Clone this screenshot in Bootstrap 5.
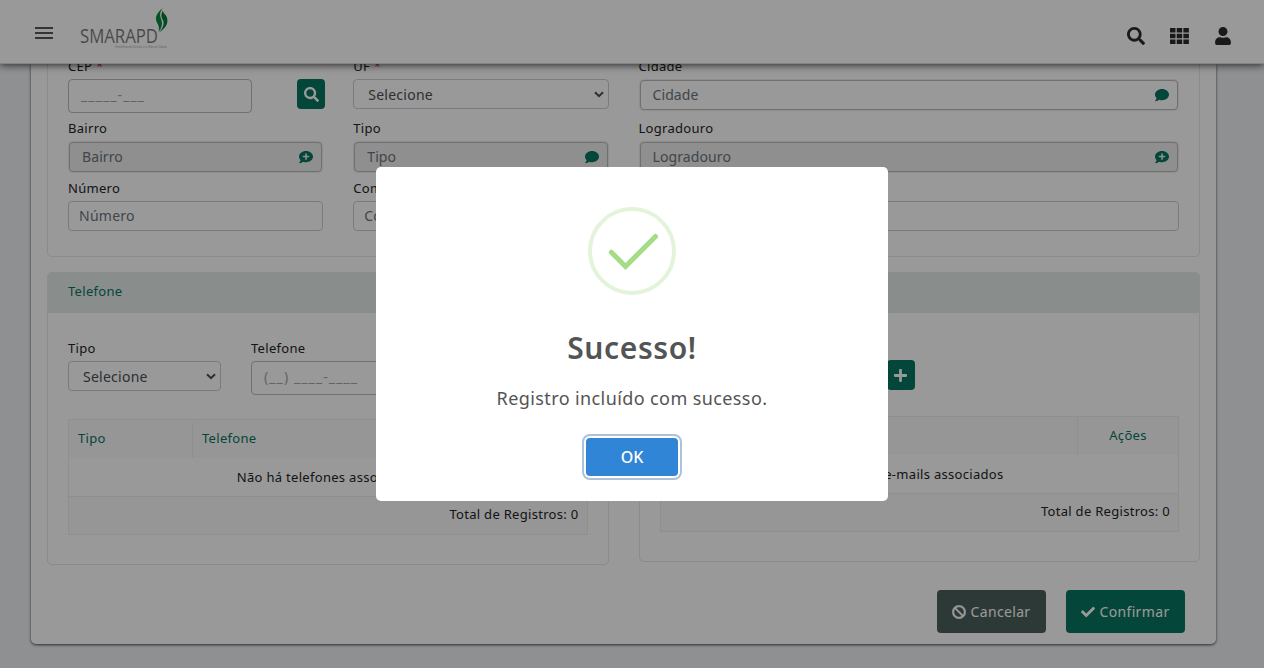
<!DOCTYPE html>
<html lang="pt-BR">
<head>
<meta charset="utf-8">
<title>SMARAPD</title>
<link href="https://cdn.jsdelivr.net/npm/bootstrap@5.3.0/dist/css/bootstrap.min.css" rel="stylesheet">
<style>
body{font-family:"Noto Sans","Open Sans",sans-serif;font-size:13px;color:#212529;background:#eef1f4;height:668px;overflow:hidden;letter-spacing:.3px}
svg{display:block;flex:none}
.topbar{height:64px;background:#fff;border-bottom:1px solid #dcdcdc;box-shadow:0 1px 8px rgba(0,0,0,.75);z-index:5;padding:0 33px 0 35px}
.ic{fill:currentColor}
.page-card{margin:0 48px 0 31px;height:580px;border-radius:0 0 5px 5px;box-shadow:0 1px 3px rgba(0,0,0,.7);padding:0 16px}
.panel{border:1px solid #e2eaea;border-radius:5px}
.address{display:flow-root;height:193px;border-top:0;border-radius:0 0 5px 5px;padding:0 20px}
.row-30{--bs-gutter-x:30px}
.lab{height:20px;line-height:20px;white-space:nowrap}
.r1{height:62px;margin-top:-8px}.r2{height:60px}
.ctl{height:30px;padding:0 10px;border:1px solid #c9ced4;border-radius:4px;font-size:14px;line-height:1;color:#6c757d;letter-spacing:.25px;background:#fff;display:flex;align-items:center;white-space:nowrap}
.ctl.pick{color:#495057;padding:1px 4px 0 14px;justify-content:space-between}
.ctl.mask{height:34px;border-color:#bbb;color:#a5a5a5;padding:0 0 3px 12px;letter-spacing:1.1px}
.ctl.lookup{margin-left:1px;margin-right:1px;border-color:#bbb;box-shadow:0 0 1px 1px rgba(0,0,0,.08);padding:0 8px 0 12px;justify-content:space-between;letter-spacing:.1px}
.ctl.off{background:#eee}
.lookup svg{color:#077560}
.btn-g{background:#077560;color:#fff;border-radius:4px}
.sq{width:28px;height:30px}
.head{height:41px;background:#e4edec;color:#077560;border-radius:5px 5px 0 0;padding:0 0 2px 21px;margin:-1px -1px 0}
.grid{border:1px solid #eee}
.grid>div{height:38px}
.g-row{padding-top:2px}
.g-head{background:#fafafa;color:#077560;padding-top:3px}
.g-head span:first-child{border-right:1px solid #eee}
.g-foot{background:#fafafa;border-top:1px solid #eee;padding:0 8px 2px 0}
.act{height:43px;border-radius:4px;font-size:14px;letter-spacing:.35px;color:#fff}
.shade{position:fixed;inset:0;background:rgba(0,0,0,.4);z-index:20}
.pop{width:512px;height:334px;border-radius:5px;background:#fff;color:#545454;padding-top:40px;border:0}
.pop h2{font-size:30px;line-height:36px;font-weight:600;letter-spacing:.6px;margin:35px 0 0}
.pop p{font-size:18px;line-height:24px;letter-spacing:.4px;margin:20px 0 0}
.ok{width:92px;height:38px;margin-top:28px;border-radius:4px;background:#3085d6;color:#fff;font-size:16px;font-weight:500;letter-spacing:0;box-shadow:0 0 0 2px #fff,0 0 0 4px #adc2d8}
</style>
</head>
<body>
<svg width="0" height="0" class="position-absolute">
<symbol id="search" viewBox="0 0 512 512"><path d="M505 442.7L405.3 343c-4.500-4.500-10.600-7-17-7H372c27.600-35.300 44-79.700 44-128C416 93.100 322.900 0 208 0S0 93.100 0 208s93.100 208 208 208c48.300 0 92.700-16.400 128-44v16.300c0 6.400 2.500 12.500 7 17l99.700 99.700c9.400 9.400 24.600 9.400 33.900 0l28.300-28.300c9.400-9.400 9.400-24.600.1-34zM208 336c-70.700 0-128-57.200-128-128 0-70.700 57.200-128 128-128 70.700 0 128 57.200 128 128 0 70.700-57.200 128-128 128z"/></symbol>
<symbol id="comment" viewBox="0 0 512 512"><path d="M256 32C114.600 32 0 125.100 0 240c0 49.600 21.400 95 57 130.700C44.500 421.100 2.700 466 2.200 466.500c-2.200 2.300-2.800 5.700-1.500 8.700S4.800 480 8 480c66.300 0 116-31.800 140.600-51.400 32.700 12.300 69 19.400 107.400 19.400 141.400 0 256-93.100 256-208S397.400 32 256 32z"/></symbol>
<symbol id="comment-plus" viewBox="0 0 512 512"><use href="#comment"/><path d="M256 146v188M162 240h188" stroke="#eee" stroke-width="58" stroke-linecap="round"/></symbol>
<symbol id="chev" viewBox="0 0 10 7"><path d="M1 1.200L5 5.200 9 1.200" fill="none" stroke="currentColor" stroke-width="2"/></symbol>
</svg>

<header class="topbar position-relative d-flex align-items-center">
  <svg width="18" height="12" style="margin-top:3px"><path d="M0 1h18M0 6h18M0 11h18" stroke="#5c5558" stroke-width="2"/></svg>
  <svg width="104" height="56" viewBox="70 4 104 56" class="overflow-visible" style="margin-left:17px">
    <text x="80" y="43" font-family="Open Sans" font-size="19.500" fill="#7c7c7c" textLength="78" lengthAdjust="spacingAndGlyphs" letter-spacing="0">SMARAPD</text>
    <text x="115" y="48" font-size="3.600" fill="#aaa" textLength="52" lengthAdjust="spacingAndGlyphs" letter-spacing="0">Simplificando Gestão e a Vida na Cidade</text>
    <path d="M162.800 8C156 13.500 154 18 158 24.500c1.200 2.500 1.200 5 .5 7.500 3.500-4.500 4.700-8.500 2-14.500-1.200-3.500 0-6.500 2.300-9.500z" fill="#068a3d"/>
    <path d="M163 10.500c-2.600 4.500-1.600 7 .2 10 1.300 4-.7 8-4.200 12 7-4.500 9.500-9 8-15-1-3-4-4-4-7z" fill="#077c36"/>
  </svg>
  <div class="d-flex align-items-center ms-auto" style="color:#2c2c2c;margin-top:9px">
    <svg class="ic" width="18" height="18"><use href="#search"/></svg>
    <svg class="ic" width="19" height="16" viewBox="0 0 19 16" style="margin-left:25px"><path d="M0 0h5.500v4.500H0zM6.700 0h5.500v4.500H6.700zM13.400 0h5.500v4.500h-5.500zM0 5.700h5.500v4.500H0zM6.700 5.700h5.500v4.500H6.700zM13.400 5.700h5.500v4.500h-5.500zM0 11.400h5.500v4.500H0zM6.700 11.400h5.500v4.500H6.700zM13.400 11.400h5.500v4.500h-5.500z"/></svg>
    <svg class="ic" width="16" height="18" viewBox="0 0 448 512" style="margin-left:26px"><path d="M224 256c70.700 0 128-57.300 128-128S294.700 0 224 0 96 57.300 96 128s57.300 128 128 128zm89.600 32h-16.700c-22.200 10.200-46.900 16-72.900 16s-50.600-5.800-72.900-16h-16.700C60.200 288 0 348.200 0 422.400V464c0 26.500 21.500 48 48 48h352c26.500 0 48-21.500 48-48v-41.600c0-74.200-60.200-134.400-134.400-134.400z"/></svg>
  </div>
</header>

<main class="page-card bg-white">
  <section class="panel address">
    <div class="row row-30 r1">
      <div class="col-3">
        <div class="lab">CEP <span class="text-danger">*</span></div>
        <div class="d-flex justify-content-between" style="margin-top:3px;margin-right:-2px"><div class="ctl mask" style="width:184px">_____-___</div><span class="btn-g sq d-flex align-items-center justify-content-center"><svg class="ic" width="15" height="15"><use href="#search"/></svg></span></div>
      </div>
      <div class="col-3"><div class="lab">UF <span class="text-danger">*</span></div><div class="ctl pick" style="margin-top:3px">Selecione<svg width="10" height="7"><use href="#chev"/></svg></div></div>
      <div class="col-6"><div class="lab">Cidade</div><div class="ctl lookup" style="margin-top:4px">Cidade<svg class="ic" width="14" height="14"><use href="#comment"/></svg></div></div>
    </div>
    <div class="row row-30 r2">
      <div class="col-3"><div class="lab">Bairro</div><div class="ctl lookup off mt-1">Bairro<svg class="ic" width="14" height="14"><use href="#comment-plus"/></svg></div></div>
      <div class="col-3"><div class="lab">Tipo</div><div class="ctl lookup off mt-1">Tipo<svg class="ic" width="14" height="14"><use href="#comment"/></svg></div></div>
      <div class="col-6"><div class="lab">Logradouro</div><div class="ctl lookup off mt-1">Logradouro<svg class="ic" width="14" height="14"><use href="#comment-plus"/></svg></div></div>
    </div>
    <div class="row row-30">
      <div class="col-3"><div class="lab">Número</div><div class="ctl" style="margin-top:3px">Número</div></div>
      <div class="col-9"><div class="lab">Complemento</div><div class="ctl" style="margin-top:3px">Complemento</div></div>
    </div>
  </section>

  <div class="row row-30 align-items-start" style="margin-top:15px">
    <div class="col-6">
      <section class="panel" style="height:293px">
        <div class="head d-flex align-items-center">Telefone</div>
        <div style="padding:25px 20px 0">
          <div class="d-flex">
            <div style="width:153px;margin-right:30px"><div class="lab">Tipo</div><div class="ctl pick" style="margin-top:3px">Selecione<svg width="10" height="7"><use href="#chev"/></svg></div></div>
            <div class="flex-fill"><div class="lab">Telefone</div><div class="ctl mask" style="margin-top:3px">(__) ____-____</div></div>
          </div>
          <div class="grid" style="margin-top:24px">
            <div class="g-head d-flex"><span style="width:124px;padding:6px 9px">Tipo</span><span style="padding:6px 9px">Telefone</span></div>
            <div class="g-row d-flex align-items-center justify-content-center">Não há telefones associados</div>
            <div class="g-foot d-flex align-items-center justify-content-end">Total de Registros: 0</div>
          </div>
        </div>
      </section>
    </div>
    <div class="col-6">
      <section class="panel" style="height:290px">
        <div class="head"></div>
        <div style="padding:47px 20px 0">
          <div class="d-flex" style="padding-left:227px"><span class="btn-g sq d-flex align-items-center justify-content-center"><svg class="ic" width="13" height="15" viewBox="0 0 448 512"><path d="M416 208H272V64c0-17.670-14.330-32-32-32h-32c-17.670 0-32 14.330-32 32v144H32c-17.670 0-32 14.330-32 32v32c0 17.670 14.330 32 32 32h144v144c0 17.670 14.330 32 32 32h32c17.670 0 32-14.330 32-32V304h144c17.670 0 32-14.330 32-32v-32c0-17.670-14.330-32-32-32z"/></svg></span></div>
          <div class="grid" style="margin-top:26px">
            <div class="g-head d-flex pt-0"><span class="flex-fill"></span><span class="d-flex align-items-center justify-content-center" style="width:100px">Ações</span></div>
            <div class="g-row d-flex align-items-center justify-content-center">Não há e-mails associados</div>
            <div class="g-foot d-flex align-items-center justify-content-end">Total de Registros: 0</div>
          </div>
        </div>
      </section>
    </div>
  </div>

  <div class="d-flex justify-content-end" style="gap:20px;margin-top:25px;padding-right:15px">
    <span class="act d-flex align-items-center justify-content-center" style="width:109px;background:#4b5f5a;gap:4px"><svg class="ic" width="14" height="14" viewBox="0 0 512 512"><path stroke="currentColor" stroke-width="16" d="M256 8C119.034 8 8 119.033 8 256s111.034 248 248 248 248-111.034 248-248S392.967 8 256 8zm130.108 117.892c65.448 65.448 70 165.481 20.677 235.637L150.470 105.216c70.204-49.356 170.226-44.735 235.638 20.676zM125.892 386.108c-65.448-65.448-70-165.481-20.677-235.637L361.530 406.784c-70.203 49.356-170.226 44.736-235.638-20.676z"/></svg>Cancelar</span>
    <span class="act btn-g d-flex align-items-center justify-content-center" style="width:119px;gap:4px"><svg class="ic" width="14" height="14" viewBox="0 0 512 512"><path d="M173.898 439.404l-166.400-166.400c-9.997-9.997-9.997-26.206 0-36.204l36.203-36.204c9.997-9.998 26.207-9.998 36.204 0L192 312.690 432.095 72.596c9.997-9.997 26.207-9.997 36.204 0l36.203 36.204c9.997 9.997 9.997 26.206 0 36.204l-294.400 294.401c-9.998 9.997-26.207 9.997-36.204-.001z"/></svg>Confirmar</span>
  </div>
</main>

<div class="shade d-flex align-items-center justify-content-center">
  <div class="pop d-flex flex-column align-items-center" role="dialog">
    <svg width="88" height="88" fill="none"><circle cx="44" cy="44" r="42" stroke="#e3f4da" stroke-width="4"/><path d="M23.300 45.200l14.200 14.300 30-30" stroke="#a5dc86" stroke-width="5" stroke-linecap="round"/></svg>
    <h2>Sucesso!</h2>
    <p>Registro incluído com sucesso.</p>
    <button type="button" class="btn ok p-0">OK</button>
  </div>
</div>
<script src="https://cdn.jsdelivr.net/npm/bootstrap@5.3.0/dist/js/bootstrap.bundle.min.js"></script>
</body>
</html>
